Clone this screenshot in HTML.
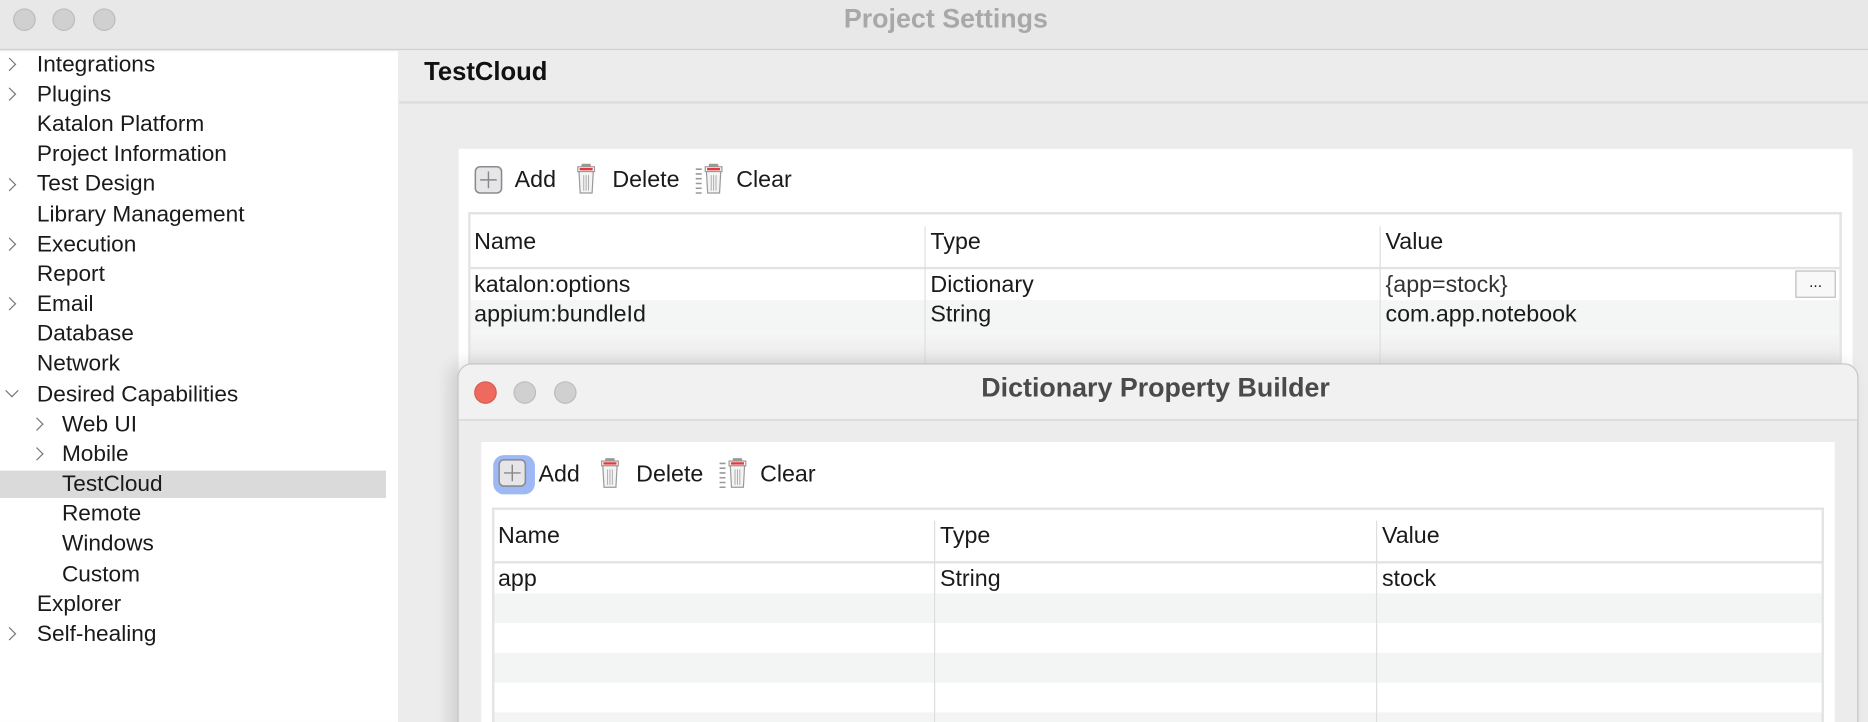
<!DOCTYPE html>
<html><head><meta charset="utf-8"><style>
*{margin:0;padding:0;box-sizing:border-box}
html,body{width:1868px;height:722px;overflow:hidden;background:#ececec}
#w{position:absolute;left:0;top:0;width:1568px;height:606px;overflow:hidden;transform:scale(1.19133);transform-origin:0 0;font-family:"Liberation Sans",sans-serif;color:#1a1a1a;font-size:19px}
.a{position:absolute}
.tl{position:absolute;width:19px;height:19px;border-radius:50%;background:#d0d0d0;border:1px solid #bcbcbc}
.side div{position:absolute;height:25px;line-height:25px;white-space:nowrap;font-size:19px}
.chev{position:absolute;width:8px;height:8px;border-right:1.8px solid #777;border-top:1.8px solid #777;transform:rotate(45deg)}
.tb span{position:absolute;font-size:19.5px}
.cell{position:absolute;font-size:19.5px;white-space:nowrap}
</style></head><body><div id="w">
<!-- title bar -->
<div class="a" style="left:0;top:0;width:1568px;height:42px;background:#e8e8e8;border-bottom:1px solid #d0d0d0"></div>
<div class="tl" style="left:11px;top:7px"></div><div class="tl" style="left:44px;top:7px"></div><div class="tl" style="left:78px;top:7px"></div>
<div class="a" style="left:0;width:1588px;top:3px;text-align:center;font-weight:bold;font-size:22.5px;color:#a8a8a8">Project Settings</div>
<!-- sidebar -->
<div class="a" style="left:0;top:43px;width:334px;height:563px;background:#fff"></div>
<div class="a" style="left:0;top:395px;width:324px;height:23px;background:#dadada"></div>
<div class="side">
<div style="left:31px;top:42px">Integrations</div>
<div style="left:31px;top:67px">Plugins</div>
<div style="left:31px;top:92px">Katalon Platform</div>
<div style="left:31px;top:117px">Project Information</div>
<div style="left:31px;top:142px">Test Design</div>
<div style="left:31px;top:168px">Library Management</div>
<div style="left:31px;top:193px">Execution</div>
<div style="left:31px;top:218px">Report</div>
<div style="left:31px;top:243px">Email</div>
<div style="left:31px;top:268px">Database</div>
<div style="left:31px;top:293px">Network</div>
<div style="left:31px;top:319px">Desired Capabilities</div>
<div style="left:52px;top:344px">Web UI</div>
<div style="left:52px;top:369px">Mobile</div>
<div style="left:52px;top:394px">TestCloud</div>
<div style="left:52px;top:419px">Remote</div>
<div style="left:52px;top:444px">Windows</div>
<div style="left:52px;top:470px">Custom</div>
<div style="left:31px;top:495px">Explorer</div>
<div style="left:31px;top:520px">Self-healing</div>
</div>
<div class="chev" style="left:4px;top:50px"></div>
<div class="chev" style="left:4px;top:75px"></div>
<div class="chev" style="left:4px;top:151px"></div>
<div class="chev" style="left:4px;top:201px"></div>
<div class="chev" style="left:4px;top:251px"></div>
<div class="chev" style="left:6px;top:324px;transform:rotate(135deg)"></div>
<div class="chev" style="left:27px;top:352px"></div>
<div class="chev" style="left:27px;top:377px"></div>
<div class="chev" style="left:4px;top:528px"></div>
<!-- main -->
<div class="a" style="left:356px;top:48px;font-weight:bold;font-size:21.5px;color:#111">TestCloud</div>
<div class="a" style="left:335px;top:85px;width:1233px;height:2px;background:#dcdcdc"></div>
<div class="a" style="left:385px;top:125px;width:1170px;height:481px;background:#fff"></div>
<svg width="0" height="0" style="position:absolute"><defs>
<g id="add"><rect x="1" y="1" width="22" height="22" rx="4" fill="#e6e6e8" stroke="#8a8a90" stroke-width="1.3"/><path d="M12 5v14M5 12h14" stroke="#888" stroke-width="1.2"/></g>
<g id="del"><rect x="4" y="0.5" width="8" height="3" rx="1" fill="#999"/><rect x="1" y="3" width="14" height="4" fill="#fff" stroke="#999"/><rect x="2.5" y="4" width="11" height="2" fill="#e03a3a"/><path d="M2 7h12l-1 18H3z" fill="#f4f4f4" stroke="#999"/><path d="M6 10v13M8 10v13M10 10v13" stroke="#aaa" stroke-width="0.8"/></g>
</defs></svg>
<div class="tb">
<svg class="a" style="left:398px;top:139px" width="26" height="26"><use href="#add"/></svg>
<span style="left:432px;top:140px">Add</span>
<svg class="a" style="left:484px;top:137px" width="18" height="28"><use href="#del"/></svg>
<span style="left:514px;top:140px">Delete</span>
<svg class="a" style="left:583px;top:137px" width="30" height="28"><path d="M1 5h5M1 9h5M1 13h5M1 17h5M1 21h5M1 25h5" stroke="#999" stroke-width="1.3"/><g transform="translate(8,0)"><use href="#del"/></g></svg>
<span style="left:618px;top:140px">Clear</span>
</div>
<!-- table 1 -->
<div class="a" style="left:393px;top:178px;width:1153px;height:428px;border:2px solid #e3e3e3;border-bottom:none;background:#fff"></div>
<div class="a" style="left:395px;top:224px;width:1149px;height:2px;background:#e3e3e3"></div>
<div class="a" style="left:395px;top:252px;width:1149px;height:25px;background:#f4f5f5"></div>
<div class="a" style="left:395px;top:277px;width:1149px;height:30px;background:linear-gradient(#f7f7f7,#e8e8e8)"></div>
<div class="a" style="left:776px;top:190px;width:1px;height:120px;background:#dedede"></div>
<div class="a" style="left:1158px;top:190px;width:1px;height:120px;background:#dedede"></div>
<div class="cell" style="left:398px;top:192px">Name</div>
<div class="cell" style="left:781px;top:192px">Type</div>
<div class="cell" style="left:1163px;top:192px">Value</div>
<div class="cell" style="left:398px;top:228px">katalon:options</div>
<div class="cell" style="left:781px;top:228px">Dictionary</div>
<div class="cell" style="left:1163px;top:228px;color:#333">{app=stock}</div>
<div class="cell" style="left:398px;top:253px">appium:bundleId</div>
<div class="cell" style="left:781px;top:253px">String</div>
<div class="cell" style="left:1163px;top:253px">com.app.notebook</div>
<div class="a" style="left:1507px;top:227px;width:34px;height:23px;border:1px solid #bdbdbd;background:#f8f8f8;font-size:13px;text-align:center;line-height:18px">...</div>
<!-- dialog -->
<div class="a" style="left:384px;top:305px;width:1176px;height:320px;border:1px solid #c4c4c4;border-radius:12px 12px 0 0;background:#ececec;box-shadow:-6px 0 14px rgba(0,0,0,0.12);overflow:hidden">
<div class="a" style="left:0;top:0;width:100%;height:47px;background:#f1f1f1;border-bottom:1px solid #d2d2d2"></div>
</div>
<div class="tl" style="left:398px;top:320px;background:#ee6a5e;border-color:#d65a4f"></div>
<div class="tl" style="left:431px;top:320px"></div>
<div class="tl" style="left:465px;top:320px"></div>
<div class="a" style="left:770px;top:313px;width:400px;text-align:center;font-weight:bold;font-size:22.5px;color:#4a4a4a">Dictionary Property Builder</div>
<div class="a" style="left:404px;top:371px;width:1136px;height:240px;background:#fff"></div>
<div class="a" style="left:414px;top:382px;width:35px;height:33px;border-radius:9px;background:#9db8f4"></div>
<div class="tb">
<svg class="a" style="left:418px;top:385px" width="26" height="26"><use href="#add"/></svg>
<span style="left:452px;top:387px">Add</span>
<svg class="a" style="left:504px;top:384px" width="18" height="28"><use href="#del"/></svg>
<span style="left:534px;top:387px">Delete</span>
<svg class="a" style="left:603px;top:384px" width="30" height="28"><path d="M1 5h5M1 9h5M1 13h5M1 17h5M1 21h5M1 25h5" stroke="#999" stroke-width="1.3"/><g transform="translate(8,0)"><use href="#del"/></g></svg>
<span style="left:638px;top:387px">Clear</span>
</div>
<div class="a" style="left:413px;top:426px;width:1118px;height:190px;border:2px solid #e3e3e3;border-bottom:none;background:#fff"></div>
<div class="a" style="left:415px;top:471px;width:1114px;height:2px;background:#e3e3e3"></div>
<div class="a" style="left:415px;top:498px;width:1114px;height:25px;background:#f3f4f4"></div>
<div class="a" style="left:415px;top:548px;width:1114px;height:25px;background:#f3f4f4"></div>
<div class="a" style="left:415px;top:598px;width:1114px;height:10px;background:#f3f4f4"></div>
<div class="a" style="left:784px;top:437px;width:1px;height:170px;background:#dedede"></div>
<div class="a" style="left:1155px;top:437px;width:1px;height:170px;background:#dedede"></div>
<div class="cell" style="left:418px;top:439px">Name</div>
<div class="cell" style="left:789px;top:439px">Type</div>
<div class="cell" style="left:1160px;top:439px">Value</div>
<div class="cell" style="left:418px;top:475px">app</div>
<div class="cell" style="left:789px;top:475px">String</div>
<div class="cell" style="left:1160px;top:475px">stock</div>
</div></body></html>
